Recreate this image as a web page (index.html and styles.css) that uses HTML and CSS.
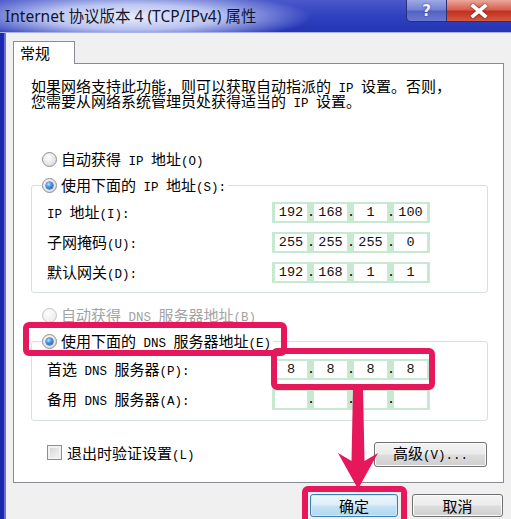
FILE: index.html
```html
<!DOCTYPE html>
<html lang="zh-CN">
<head>
<meta charset="utf-8">
<title>Internet 协议版本 4 (TCP/IPv4) 属性</title>
<link rel="stylesheet" href="styles.css">
</head>
<body>
<div class="window">
  <div class="titlebar">
    <div class="title">Internet 协议版本 4 (TCP/IPv4) 属性</div>
    <div class="caption-btns">
      <div class="cbtn help">?</div>
      <div class="cbtn close">
        <svg width="20" height="14" viewBox="0 0 20 14"><path d="M4 2 L16 12 M16 2 L4 12" stroke="#fff" stroke-width="3.6" stroke-linecap="square" fill="none"/></svg>
      </div>
    </div>
  </div>
  <div class="client">
    <div class="tabs"><div class="tab">常规</div></div>
    <div class="panel">
      <div class="intro">
        <div class="line">如果网络支持此功能，则可以获取自动指派的<span class="l"> IP </span>设置。否则，</div>
        <div class="line">您需要从网络系统管理员处获得适当的<span class="l"> IP </span>设置。</div>
      </div>

      <label class="opt first"><span class="radio"></span><span class="txt">自动获得<span class="l"> IP </span>地址<span class="l">(O)</span></span></label>
      <div class="group">
        <label class="opt legend"><span class="radio on"></span><span class="txt">使用下面的<span class="l"> IP </span>地址<span class="l">(S):</span></span></label>
        <div class="rows">
          <div class="row">
            <span class="lbl"><span class="l">IP </span>地址<span class="l">(I):</span></span>
            <div class="ip"><span class="seg">192</span><span class="dot">.</span><span class="seg">168</span><span class="dot">.</span><span class="seg">1</span><span class="dot">.</span><span class="seg">100</span></div>
          </div>
          <div class="row">
            <span class="lbl">子网掩码<span class="l">(U):</span></span>
            <div class="ip"><span class="seg">255</span><span class="dot">.</span><span class="seg">255</span><span class="dot">.</span><span class="seg">255</span><span class="dot">.</span><span class="seg">0</span></div>
          </div>
          <div class="row">
            <span class="lbl">默认网关<span class="l">(D):</span></span>
            <div class="ip"><span class="seg">192</span><span class="dot">.</span><span class="seg">168</span><span class="dot">.</span><span class="seg">1</span><span class="dot">.</span><span class="seg">1</span></div>
          </div>
        </div>
      </div>

      <label class="opt dns-auto disabled"><span class="radio"></span><span class="txt">自动获得<span class="l"> DNS </span>服务器地址<span class="l">(B)</span></span></label>
      <div class="group dns">
        <label class="opt legend"><span class="radio on"></span><span class="txt">使用下面的<span class="l"> DNS </span>服务器地址<span class="l">(E)</span></span></label>
        <div class="rows">
          <div class="row">
            <span class="lbl">首选<span class="l"> DNS </span>服务器<span class="l">(P):</span></span>
            <div class="ip"><span class="seg">8</span><span class="dot">.</span><span class="seg">8</span><span class="dot">.</span><span class="seg">8</span><span class="dot">.</span><span class="seg">8</span></div>
          </div>
          <div class="row">
            <span class="lbl">备用<span class="l"> DNS </span>服务器<span class="l">(A):</span></span>
            <div class="ip"><span class="seg"></span><span class="dot">.</span><span class="seg"></span><span class="dot">.</span><span class="seg"></span><span class="dot">.</span><span class="seg"></span></div>
          </div>
        </div>
      </div>

      <div class="bottom-row">
        <label class="check"><span class="box"></span><span class="txt">退出时验证设置<span class="l">(L)</span></span></label>
        <button class="btn adv">高级<span class="l">(V)...</span></button>
      </div>
    </div>
    <div class="footer">
      <button class="btn ok">确定</button>
      <button class="btn cancel">取消</button>
    </div>
  </div>

  <div class="mark mark-radio"></div>
  <div class="mark mark-field"></div>
  <div class="mark mark-ok"></div>
  <svg class="arrow" width="60" height="110" viewBox="330 385 60 110">
    <polygon points="353,388 363,388 364.5,461 378,453 358,489 338,453 351.5,461" fill="#e6175b"/>
  </svg>
</div>
</body>
</html>
```

FILE: styles.css
```css
html, body {
  margin: 0;
  padding: 0;
}
body {
  background: #f0f0f0;
  font-family: "Noto Sans CJK SC", sans-serif;
  font-size: 15px;
  color: #000;
  overflow: hidden;
}
.window {
  position: relative;
  width: 511px;
  height: 519px;
  overflow: hidden;
  display: flex;
  flex-direction: column;
}

/* title bar */
.titlebar {
  flex: none;
  height: 32px;
  border-bottom: 1px solid #a9b3e6;
  display: flex;
  justify-content: space-between;
  align-items: flex-start;
  background:
    radial-gradient(ellipse 180px 26px at 132px 17px, rgba(235,240,255,0.98) 0%, rgba(205,214,248,0.88) 48%, rgba(90,108,214,0) 100%),
    linear-gradient(180deg, #4a58c9 0%, #2e3fbf 55%, #2434b3 100%);
}
.title {
  padding-left: 5px;
  line-height: 32px;
  font-family: "Noto Sans", "Noto Sans CJK SC", sans-serif;
  font-size: 15.5px;
  color: #10142e;
  white-space: nowrap;
}
.caption-btns {
  display: flex;
}
.cbtn {
  height: 22px;
  box-sizing: border-box;
  display: flex;
  align-items: center;
  justify-content: center;
  border: 1px solid #2a3170;
  border-top: none;
}
.help {
  width: 41px;
  border-radius: 0 0 0 5px;
  background: linear-gradient(180deg, #9ea8e6 0%, #7280d2 48%, #5262c2 52%, #6a7ad2 100%);
  color: #f4f4f8;
  font-family: "DejaVu Sans", sans-serif;
  font-weight: bold;
  font-size: 15px;
  line-height: 20px;
  text-shadow: 0 0 2px #2a3380;
}
.close {
  width: 64px;
  border-left: none;
  border-right: none;
  background: linear-gradient(180deg, #eaa89b 0%, #d8604f 45%, #c3301f 55%, #d45a40 100%);
}
.close svg {
  filter: drop-shadow(0 0 1px #6a1a10);
}

/* client area */
.client {
  flex: 1;
  display: flex;
  flex-direction: column;
  border-left: 4px solid #1b28ae;
  padding-left: 2px;
  box-shadow: inset 2px 0 0 #6674d6;
}
.tabs {
  display: flex;
  flex: none;
  margin: 8px 0 0 7px;
}
.tab {
  position: relative;
  z-index: 1;
  width: 62px;
  height: 23px;
  box-sizing: border-box;
  padding-left: 6px;
  border: 1px solid #898c95;
  border-bottom: none;
  background: #fff;
  line-height: 22px;
  margin-bottom: -1px;
}
.panel {
  flex: none;
  margin: 0 7px;
  border: 1px solid #898c95;
  background: #fff;
  padding: 14px 15px 15px 17px;
}
.l {
  font-family: "Liberation Mono", monospace;
  font-size: 12.5px;
}
.intro {
  display: flex;
  flex-direction: column;
}
.line {
  height: 15px;
  line-height: 15px;
  white-space: nowrap;
  overflow: visible;
}

/* radio options */
.opt {
  display: flex;
  align-items: center;
  gap: 4px;
  height: 20px;
  line-height: 20px;
  white-space: nowrap;
}
.opt.first {
  margin: 41px 0 0 11px;
}
.opt.dns-auto {
  margin: 12px 0 0 11px;
}
.opt.disabled {
  color: #a3a3a3;
}
.txt {
  height: 20px;
  overflow: visible;
}
.radio {
  position: relative;
  flex: none;
  width: 15px;
  height: 15px;
  box-sizing: border-box;
  border-radius: 50%;
  border: 1px solid #8e8f8f;
  background: radial-gradient(circle at 40% 35%, #fdfdfd 0%, #e4e4e4 60%, #cfcfcf 100%);
}
.disabled .radio {
  border-color: #c4c4c4;
  background: radial-gradient(circle at 40% 35%, #fefefe 0%, #f0f0f0 60%, #e2e2e2 100%);
}
.radio.on::after {
  content: "";
  position: absolute;
  left: 3px;
  top: 3px;
  width: 7px;
  height: 7px;
  border-radius: 50%;
  background: radial-gradient(circle at 38% 32%, #b8e6ff 0%, #3d8ee6 45%, #1a4fae 100%);
  box-shadow: 0 0 0 0.5px #1b3f8c;
}

/* group boxes */
.group {
  margin-top: 16px;
  border: 1px solid #d5dfe5;
  border-radius: 3px;
  padding: 0 0 9px 0;
}
.group.dns {
  padding-bottom: 10px;
}
.legend {
  margin: -11px 0 0 10px;
  width: max-content;
  padding-right: 2px;
  background: #fff;
}
.rows {
  margin-top: 7px;
  padding-left: 15px;
  display: flex;
  flex-direction: column;
  gap: 9px;
}
.group.dns .rows {
  margin-top: 8px;
}
.row {
  display: flex;
  align-items: center;
  height: 21px;
}
.lbl {
  width: 225px;
  height: 21px;
  white-space: nowrap;
  line-height: 20px;
}

/* ip fields */
.ip {
  display: flex;
  width: 158px;
  height: 21px;
  box-sizing: border-box;
  padding: 2px 3px;
  background: #c8e9d1;
}
.seg {
  width: 33px;
  background: #fff;
  text-align: center;
  font-family: "Liberation Mono", monospace;
  font-size: 13.5px;
  line-height: 17px;
  color: #111;
}
.seg:first-child {
  width: 32px;
}
.dot {
  width: 7px;
  text-align: center;
  font-family: "Liberation Mono", monospace;
  font-size: 13.5px;
  line-height: 18px;
  overflow: visible;
  white-space: nowrap;
}

/* bottom row */
.bottom-row {
  margin-top: 21px;
  height: 25px;
  display: flex;
  justify-content: space-between;
  align-items: center;
}
.check {
  display: flex;
  align-items: center;
  gap: 5px;
  height: 20px;
  margin: 0 0 4px 16px;
  line-height: 20px;
  white-space: nowrap;
}
.box {
  width: 15px;
  height: 15px;
  box-sizing: border-box;
  border: 1px solid #8e8f8f;
  background: linear-gradient(135deg, #cfcfcf 0%, #e6e6e6 50%, #f7f7f7 100%);
  box-shadow: inset 0 0 0 2px #f2f2f2;
}

/* buttons */
.btn {
  box-sizing: border-box;
  height: 23px;
  padding: 0;
  border: 1px solid #707070;
  border-radius: 3px;
  background: linear-gradient(180deg, #f3f3f3 0%, #ebebeb 49%, #dddddd 51%, #cfcfcf 100%);
  box-shadow: inset 0 0 0 1px #fbfbfb;
  font-family: "Noto Sans CJK SC", sans-serif;
  font-size: 15px;
  line-height: 20px;
  color: #000;
  text-align: center;
}
.btn.adv {
  width: 113px;
  height: 25px;
  margin-right: 1px;
}
.footer {
  flex: none;
  display: flex;
  justify-content: flex-end;
  gap: 14px;
  margin: 11px 8px 0 0;
}
.btn.ok {
  width: 88px;
  border-color: #3c7fb1;
  background: linear-gradient(180deg, #ecf6fc 0%, #dcedf8 49%, #c5e2f5 51%, #b2d8ef 100%);
  box-shadow: inset 0 0 0 1px #cfeaff;
}
.btn.cancel {
  width: 91px;
}

/* annotation overlays */
.mark {
  position: absolute;
  box-sizing: border-box;
  border: 6px solid #e6175b;
  border-radius: 6px;
}
.mark-radio {
  left: 23px;
  top: 322px;
  width: 264px;
  height: 34px;
}
.mark-field {
  left: 271px;
  top: 348px;
  width: 164px;
  height: 42px;
}
.mark-ok {
  left: 302px;
  top: 486px;
  width: 105px;
  height: 44px;
}
.arrow {
  position: absolute;
  left: 330px;
  top: 385px;
}
```
